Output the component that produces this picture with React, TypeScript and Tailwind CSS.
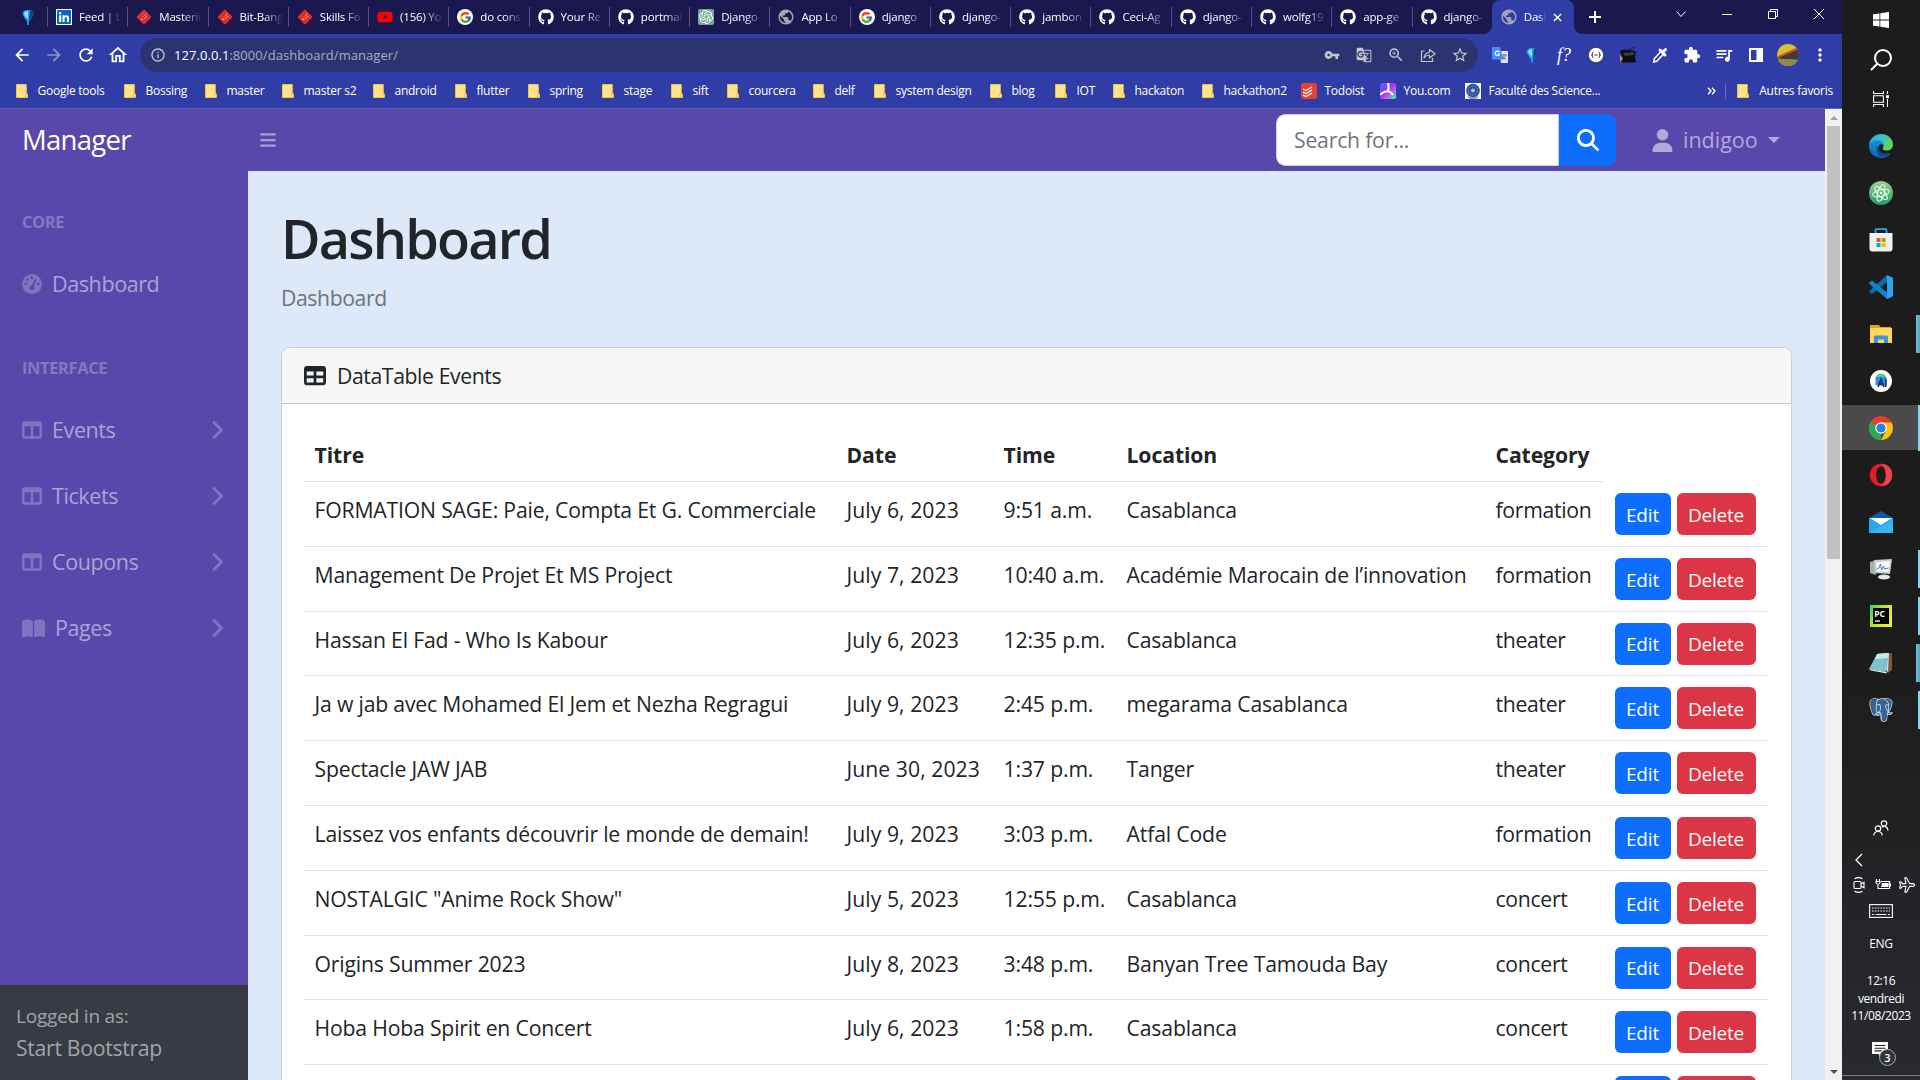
import React from "react";
import { FaAngleRight, FaBars, FaBookOpen, FaGaugeHigh, FaMagnifyingGlass, FaTable, FaTableColumns, FaUser } from "react-icons/fa6";
import { FaGithub, FaLinkedin, FaYoutube } from "react-icons/fa";
import { FcGoogle } from "react-icons/fc";
import { SiOpenai, SiPostgresql } from "react-icons/si";
import {
  MdArrowBack,
  MdArrowForward,
  MdExtension,
  MdGTranslate,
  MdInfoOutline,
  MdMoreVert,
  MdOutlineHome,
  MdPublic,
  MdQueueMusic,
  MdRefresh,
  MdStarBorder,
  MdVpnKey,
  MdZoomIn,
} from "react-icons/md";

type IconProps = { className?: string };

/* ---------- small drawings ---------- */

const Pin = ({ className = "" }: IconProps) => (
  <svg viewBox="0 0 16 16" className={`size-4 ${className}`}>
    <path d="M2.500 5 Q2.500 1 8 1 Q13.500 1 13.500 5 Q13 7 9 12.500 L8.800 16 H7.200 L7 12.500 Q3 7 2.500 5Z" fill="#1f9be8" />
    <path d="M4 4 Q6 1.500 8 2 L8 10 Q4 7 4 4Z" fill="#8fe0ff" />
    <path d="M10 2 Q13.500 2 13.500 5 Q12 8 9 12Z" fill="#0a3f86" />
  </svg>
);

const RedDiamond = () => (
  <svg viewBox="0 0 16 16" className="size-4">
    <rect x="2.600" y="2.600" width="10.800" height="10.800" rx="1" transform="rotate(45 8 8)" fill="#dc2f2a" />
    <path d="M5 10.500h2M8 10l3-3M8.500 6.500l2-1.500M6.500 8.500l1-1" stroke="#f6aaa5" strokeWidth="1" fill="none" />
  </svg>
);

const OpenAiTile = () => (
  <span className="flex size-4 items-center justify-center rounded-[2px] bg-[#74aa9c] text-white">
    <SiOpenai className="size-3.5" />
  </span>
);

const Folder = () => (
  <svg viewBox="0 0 12 14" className="h-3.5 w-3 shrink-0">
    <path d="M.5 .5h9.800v9l1.200.5v3.500H.5z" fill="#ffe38a" stroke="#e9c44a" strokeWidth="1" />
    <path d="M9.500 10v3.500" stroke="#e9c44a" strokeWidth="1" />
  </svg>
);

const Todoist = () => (
  <svg viewBox="0 0 16 16" className="size-4 shrink-0">
    <rect width="16" height="16" rx="2.500" fill="#e44332" />
    <path d="M2 6l3 1.500L11 4M2 9l3 1.500L11 7M2 12l3 1.500L11 10" stroke="#fff" strokeWidth="1.200" fill="none" />
  </svg>
);

const YouCom = () => (
  <svg viewBox="0 0 16 16" className="size-4 shrink-0">
    <defs>
      <linearGradient id="you" x1="0" y1="0" x2="1" y2="1">
        <stop offset="0" stopColor="#5a5cff" />
        <stop offset=".45" stopColor="#8a3bff" />
        <stop offset=".65" stopColor="#d84fe0" />
        <stop offset=".85" stopColor="#33d9c0" />
        <stop offset="1" stopColor="#ffd84a" />
      </linearGradient>
    </defs>
    <rect width="16" height="16" rx="2.500" fill="url(#you)" />
    <path d="M8 0 Q9 5 8 8 Q4 8.500 0 11.500 M8 8 Q11 9 13 12" stroke="#fff" strokeWidth="2.200" fill="none" />
  </svg>
);

const Faculty = () => (
  <svg viewBox="0 0 16 16" className="size-4 shrink-0">
    <rect width="16" height="16" fill="#f3f6fb" />
    <circle cx="8" cy="7.500" r="6.800" fill="#2c4f94" />
    <circle cx="8" cy="7.500" r="4.500" fill="none" stroke="#8fa8d6" strokeWidth="1" strokeDasharray="1 .8" />
    <circle cx="8" cy="7.500" r="2" fill="#a9c1ea" />
    <path d="M3 13.500l2 1.500h6l2-1.500" stroke="#2c4f94" fill="none" />
  </svg>
);

const Share = () => (
  <svg viewBox="0 0 16 16" className="size-4" fill="none" stroke="currentColor" strokeWidth="1.200">
    <path d="M4.500 4H1.500v10.500h11V11" />
    <path d="M4 11Q4.500 6 9.500 5.500V2.500L15 6.800 9.500 11V8.300Q6 8 4 11Z" strokeLinejoin="round" />
  </svg>
);

const Eyedropper = () => (
  <svg viewBox="0 0 16 16" className="size-4" fill="none" stroke="#fff">
    <path d="M9 4.300l2.700 2.700-7 7.300-3 .7 .6-3.200z" strokeWidth="1.600" />
    <path d="M8 3l5 5M11.500 4.500l2-2" strokeWidth="3" strokeLinecap="round" />
  </svg>
);

const BlackFox = () => (
  <svg viewBox="0 0 16 16" className="size-4">
    <path d="M0 4l3-1.500 9 1 4 1-1 5 1 6H2l1-4z" fill="#0c0d12" />
    <path d="M5 3.500Q10 3 13 .5L15 1" stroke="#222" fill="none" />
    <path d="M0 8l2.800 3.500L0 15z" fill="#f08a24" />
    <path d="M3 6l11-1v3l-9 1z" fill="#3a3c46" />
  </svg>
);

const Braces = () => (
  <svg viewBox="0 0 16 16" className="size-4">
    <circle cx="8" cy="8" r="7.600" fill="#fff" stroke="#222" strokeWidth=".6" />
    <path d="M5.500 4.800Q4.300 5 4.500 6.700T3.500 8Q4.500 8 4.500 9.300T5.500 11.200M10.500 4.800Q11.700 5 11.500 6.700T12.500 8Q11.500 8 11.500 9.300T10.500 11.200M6.500 8h3" stroke="#333" strokeWidth="1" fill="none" />
  </svg>
);

const GoogleTranslate = () => (
  <svg viewBox="0 0 16 16" className="size-4">
    <path d="M7 4h9v12H9z" fill="#dfe3ea" />
    <path d="M9.500 8h5M12 7v1M14 8Q13 11 10 12.500M10.500 9q1 2.500 3.500 3.500" stroke="#57677d" fill="none" strokeWidth=".9" />
    <path d="M0 0h8l3.500 12.500H1Q0 12.500 0 11.500z" fill="#4c8bf5" />
    <path d="M7.300 5A2.200 2.200 0 1 0 7.600 7H5.800" stroke="#fff" strokeWidth="1.200" fill="none" />
  </svg>
);

const SidePanel = () => (
  <svg viewBox="0 0 16 16" className="size-4">
    <path d="M1 1h14v14H1zM3 3v10h5.500V3z" fill="#fff" fillRule="evenodd" />
  </svg>
);

const Avatar = () => (
  <svg viewBox="0 0 22 22" className="size-[22px]">
    <defs>
      <clipPath id="avatar">
        <circle cx="11" cy="11" r="11" />
      </clipPath>
    </defs>
    <g clipPath="url(#avatar)">
      <rect width="22" height="22" fill="#d3c436" />
      <path d="M0 14L22 5v11L0 15z" fill="#3c3c40" />
      <path d="M0 12.500L19 4l2 1.500L1 14z" fill="#dd4a22" />
      <path d="M0 14.500l22 1.500v6H0z" fill="#918b46" />
    </g>
  </svg>
);

/* ---------- taskbar drawings ---------- */

const WindowsLogo = () => (
  <svg viewBox="0 0 16 16" className="size-4" fill="#fff">
    <path d="M0 2.300l6.500-.9v6.200H0zM7.300 1.300L16 0v7.600H7.300zM0 8.400h6.500v6.200L0 13.700zM7.300 8.400H16V16l-8.700-1.300z" />
  </svg>
);

const TaskSearch = () => (
  <svg viewBox="0 0 22 22" className="size-[22px]" fill="none" stroke="#fff" strokeWidth="2">
    <circle cx="13" cy="9" r="8" />
    <path d="M7.500 14.500L1 21" />
  </svg>
);

const TaskView = () => (
  <svg viewBox="0 0 16 16" className="size-4" fill="none" stroke="#fff" strokeWidth="1.100">
    <path d="M.6 0v2.500h9.800V0M.6 16v-2.500h9.800V16M.6 4.800h9.800v6.400H.6zM14.500 0v3M14.500 8v8" />
    <path d="M13 4.200h3v3h-3z" fill="#fff" stroke="none" />
  </svg>
);

const Edge = () => (
  <svg viewBox="0 0 24 24" className="size-6">
    <defs>
      <linearGradient id="edgeA" x1="0" y1="0" x2="1" y2=".5">
        <stop offset="0" stopColor="#2ba8e0" />
        <stop offset=".5" stopColor="#35c1d2" />
        <stop offset="1" stopColor="#62d84b" />
      </linearGradient>
      <linearGradient id="edgeB" x1="0" y1="0" x2="0" y2="1">
        <stop offset="0" stopColor="#1795dc" />
        <stop offset="1" stopColor="#0c60b4" />
      </linearGradient>
    </defs>
    <path d="M0 11C1 4 6 0 12 0c7 0 12 5 12 10.500 0 4-3 6-6.500 6-3 0-4.500-1-3.500-2.500C16 10 12 7 8 7c-4 0-7 2-8 4z" fill="url(#edgeA)" />
    <path d="M0 12c0-4 4-6 8-6 4 0 6.500 2.500 6.500 5-4-2-5.500 1-5 4 1 5 6 7 12 4.500C19 23 16 24 12 24 5 24 0 19 0 12z" fill="url(#edgeB)" />
    <path d="M8 12c-1.500 6 2 11 6 11.500 3-.5 6-2 8-5-6 2.500-11.500.5-12.500-4z" fill="#124a8f" />
  </svg>
);

const Atom = () => (
  <svg viewBox="0 0 24 24" className="size-6">
    <defs>
      <linearGradient id="atom" x1="0" y1="0" x2="0" y2="1">
        <stop offset="0" stopColor="#9fce8b" />
        <stop offset="1" stopColor="#1f9f6d" />
      </linearGradient>
    </defs>
    <circle cx="12" cy="12" r="12" fill="url(#atom)" />
    <g fill="none" stroke="#e9fff2" strokeWidth="1">
      <ellipse cx="12" cy="12" rx="8.500" ry="3.300" transform="rotate(-14 12 12)" />
      <ellipse cx="12" cy="12" rx="8.500" ry="3.300" transform="rotate(46 12 12)" />
      <ellipse cx="12" cy="12" rx="8.500" ry="3.300" transform="rotate(106 12 12)" />
    </g>
    <circle cx="12" cy="12" r="1.300" fill="#fff" />
  </svg>
);

const Store = () => (
  <svg viewBox="0 0 24 24" className="size-6">
    <path d="M6.500 6V2q0-.8.800-.8h9.400q.8 0 .8.800v4" fill="none" stroke="#27a9ea" strokeWidth="1.800" />
    <path d="M.5 5h23v15.500q0 3-3 3h-17q-3 0-3-3z" fill="#f0f0f0" />
    <path d="M7.500 10h4v4h-4z" fill="#f25022" />
    <path d="M12.600 10h4v4h-4z" fill="#7fba00" />
    <path d="M7.500 15h4v4h-4z" fill="#00a4ef" />
    <path d="M12.600 15h4v4h-4z" fill="#ffb900" />
  </svg>
);

const VsCode = () => (
  <svg viewBox="0 0 24 24" className="size-6">
    <path d="M18 0v7L3 19 0 16.500z" fill="#0a6db3" />
    <path d="M0 7.500L3 5.500 18 17.500V24L1 9.500z" fill="#1083cd" />
    <path d="M18 0l6 2.800v18.400L18 24z" fill="#2fa4ee" />
  </svg>
);

const Explorer = () => (
  <svg viewBox="0 0 24 24" className="size-6">
    <path d="M1 3h9l1.500 2H22v6H1z" fill="#e3a01b" />
    <path d="M1 6h22v15H1z" fill="#ffd65c" />
    <path d="M5 21v-6q0-1.500 1.500-1.500h11q1.500 0 1.500 1.500v6h-4v-3.500H9V21z" fill="#3a93d9" />
  </svg>
);

const AndroidStudio = () => (
  <svg viewBox="0 0 24 24" className="size-6">
    <circle cx="12" cy="12" r="11" fill="#fff" />
    <path d="M7 8.500a5 4 0 0 1 10 0z" fill="#3ddc84" />
    <path d="M6.500 8h11v8l-4 1-7-1z" fill="#4285f4" />
    <path d="M9 18l3-8 3 8M10 15h4M16.800 10v8" stroke="#0b3050" strokeWidth="1.500" fill="none" />
  </svg>
);

const Chrome = () => (
  <svg viewBox="0 0 24 24" className="size-6">
    <path d="M12 12L1.600 6A12 12 0 0 1 22.400 6z" fill="#e33b2e" />
    <path d="M12 6.500H22.600V6H1.600L7 15z" fill="#e33b2e" />
    <path d="M1.600 6L7.300 15 12 17 9 23.700A12 12 0 0 1 1.600 6z" fill="#2da94f" />
    <path d="M12 12L12 24A12 12 0 0 1 1.600 6z" fill="#2da94f" />
    <path d="M16.800 14.800L12 24A12 12 0 0 0 22.600 6.500H12z" fill="#fbc116" />
    <circle cx="12" cy="12" r="5.800" fill="#fff" />
    <circle cx="12" cy="12" r="4.600" fill="#2f7de9" />
  </svg>
);

const Opera = () => (
  <svg viewBox="0 0 24 24" className="size-6">
    <path fillRule="evenodd" d="M12 .8a11.200 11.200 0 1 0 0 22.400 11.200 11.200 0 1 0 0-22.400zM12 3.500c3 0 4.800 3.800 4.800 8.500s-1.800 8.500-4.800 8.500-4.800-3.800-4.800-8.500S9 3.500 12 3.500z" fill="#e21b2c" />
    <path d="M12 .8c8 0 11.200 6 11.200 11.200S19.500 23 12 23.200c3-1.200 4.800-5 4.800-11.200S15 3 12 .8z" fill="#f0434c" />
  </svg>
);

const Mail = () => (
  <svg viewBox="0 0 24 24" className="size-6">
    <path d="M0 8l12-7 12 7z" fill="#0d5aa7" />
    <path d="M0 8h24v15H0z" fill="#2aa7ea" />
    <path d="M1 8h22l-11 7z" fill="#fff" />
    <path d="M0 23l24-13v13z" fill="#45c0f7" opacity=".6" />
  </svg>
);

const Monitor = () => (
  <svg viewBox="0 0 24 24" className="size-6">
    <path d="M1 5l6-2v15l-6-2z" fill="#a9adb0" />
    <path d="M2 7.500l2-.5v2l-2 .3z" fill="#7ed957" />
    <path d="M5 3l18-1-2 15-15-1z" fill="#c9cccf" />
    <path d="M7 5l14-.7-1.500 10.500L8 14.500z" fill="#f8fbfe" />
    <path d="M8 12l2-1 1.500-4 1 6 2-4 1 3 4-1" stroke="#2f86cf" fill="none" />
    <ellipse cx="15" cy="20" rx="6" ry="2.500" fill="#e4e6e8" />
  </svg>
);

const PyCharm = () => (
  <svg viewBox="0 0 24 24" className="size-6">
    <defs>
      <linearGradient id="pc" x1="0" y1="0" x2="1" y2=".6">
        <stop offset="0" stopColor="#21d789" />
        <stop offset=".4" stopColor="#a6e02c" />
        <stop offset="1" stopColor="#f3ef3a" />
      </linearGradient>
    </defs>
    <rect x="1" y="1" width="22" height="22" fill="url(#pc)" />
    <rect x="4" y="4" width="16" height="16" fill="#000" />
    <path d="M6 17h5" stroke="#fff" strokeWidth="1.300" />
    <text x="5.200" y="12.500" fill="#fff" fontSize="8.500" fontWeight="700" fontFamily="Open Sans, sans-serif">PC</text>
  </svg>
);

const Notepad = () => (
  <svg viewBox="0 0 24 24" className="size-6">
    <path d="M19 3l4-1v17l-4 3z" fill="#7b5a35" />
    <path d="M8 3l12-1-1 20z" fill="#d8dbdc" />
    <path d="M8 3l12-1-3 19L0 18z" fill="#7fc1cd" />
    <path d="M8 3l12-1-1 5-13 1z" fill="#c9e6ea" />
    <path d="M0 18l17 3 1 1.500L2 19.500z" fill="#eef3f4" />
  </svg>
);

const People = () => (
  <svg viewBox="0 0 16 16" className="size-4" fill="none" stroke="#fff" strokeWidth="1.200">
    <circle cx="11" cy="3.500" r="2.700" />
    <path d="M8.500 7Q14.500 5 15 10.500" />
    <circle cx="5" cy="8.500" r="2.700" />
    <path d="M.8 15.500Q1 11.500 5 11.500T9.200 15.500" />
  </svg>
);

const MeetNow = () => (
  <svg viewBox="0 0 16 16" className="size-4" fill="none" stroke="#fff" strokeWidth="1.100">
    <rect x="3" y="4.500" width="7" height="7" rx="1" />
    <path d="M10 7l3-1.700v5.400L10 9M3.500 1.800Q7.500-.5 11.500 1.800M3.500 14.200Q7.500 16.500 11.500 14.200" />
  </svg>
);

const Battery = () => (
  <svg viewBox="0 0 16 16" className="size-4" fill="none" stroke="#fff">
    <path d="M6 4.500h8.500v7H4M15.500 6.500v3" strokeWidth="1.200" />
    <path d="M7 6h6.500v4H6z" fill="#fff" stroke="none" />
    <path d="M1.500 2v2M4.500 2v2M1 4.500h4v1.500Q3 8.500 1 6zM3 7.500v4h2" strokeWidth="1.100" />
  </svg>
);

const Plane = () => (
  <svg viewBox="0 0 16 16" className="size-4" fill="none" stroke="#fff" strokeWidth="1.100" strokeLinejoin="round">
    <path d="M15.500 8q0-1.400-2-1.400h-3L7.500.7H5.800L7 6.600H3.500L2 4.800H.6L1.500 8 .6 11.200H2l1.500-1.800H7L5.800 15.300h1.700l3-5.900h3q2 0 2-1.400z" />
  </svg>
);

const Keyboard = () => (
  <svg viewBox="0 0 24 14" className="h-3.5 w-6" fill="none" stroke="#fff" strokeWidth="1.100">
    <rect x=".6" y=".6" width="22.800" height="12.800" />
    <path d="M3 4h18M3 7h18" strokeDasharray="1.500 1.300" />
    <path d="M3 10.500h2M6.500 10.500h11M19 10.500h2" />
  </svg>
);

const Notifications = () => (
  <svg viewBox="0 0 26 26" className="size-[26px]">
    <path d="M1 1h16v12h-6.500L8 16.500V13H1z" fill="#fff" />
    <path d="M3.500 4.500h11M3.500 7.200h11M3.500 9.900h7" stroke="#222" strokeWidth="1.100" />
    <circle cx="16.500" cy="16.500" r="8" fill="#33343a" stroke="#a9a9ab" strokeWidth="1" />
    <text x="16.500" y="20.500" textAnchor="middle" fill="#fff" fontSize="11" fontWeight="600" fontFamily="Open Sans, sans-serif">3</text>
  </svg>
);

/* ---------- browser ---------- */

const gh = <FaGithub className="size-4 text-white" />;
const google = (
  <span className="flex size-4 items-center justify-center rounded-full bg-white">
    <FcGoogle className="size-[13px]" />
  </span>
);
const globe = <MdPublic className="-m-px size-[18px] text-[#a3a5ad]" />;

const tabs: { icon: React.ReactNode; title: string }[] = [
  { icon: <FaLinkedin className="size-4 bg-white text-[#0a66c2]" />, title: "Feed | Li" },
  { icon: <RedDiamond />, title: "Masterin" },
  { icon: <RedDiamond />, title: "Bit-Bang" },
  { icon: <RedDiamond />, title: "Skills Fo" },
  { icon: <FaYoutube className="size-4 text-[#f00]" />, title: "(156) Yo" },
  { icon: google, title: "do cons" },
  { icon: gh, title: "Your Re" },
  { icon: gh, title: "portmal" },
  { icon: <OpenAiTile />, title: "Django" },
  { icon: globe, title: "App Lo" },
  { icon: google, title: "django" },
  { icon: gh, title: "django-" },
  { icon: gh, title: "jambon" },
  { icon: gh, title: "Ceci-Ag" },
  { icon: gh, title: "django-" },
  { icon: gh, title: "wolfg19" },
  { icon: gh, title: "app-ge" },
  { icon: gh, title: "django-" },
];

const TabStrip = () => (
  <div className="flex h-[34px] items-stretch bg-[#1b184f] text-[11.5px] tracking-[-0.2px] text-white">
    <div className="flex w-[47px] items-center pl-5">
      <Pin />
    </div>
    {tabs.map((t, i) => (
      <div key={i} className="flex w-[80.27px] shrink-0 items-center">
        <span className="h-5 w-px shrink-0 bg-[#565480]" />
        <span className="ml-2 shrink-0">{t.icon}</span>
        <span className="ml-[7px] w-[43px] overflow-hidden whitespace-nowrap [mask-image:linear-gradient(90deg,#000_55%,transparent)]">{t.title}</span>
      </div>
    ))}
    <div className="relative flex w-[82px] items-center rounded-t-[8px] bg-[#313da7] pl-[9px]">
      <span className="absolute bottom-0 -left-2 size-2 bg-[radial-gradient(circle_at_0_0,transparent_7.5px,#313da7_8px)]" />
      <span className="absolute -right-2 bottom-0 size-2 bg-[radial-gradient(circle_at_100%_0,transparent_7.5px,#313da7_8px)]" />
      <span>{globe}</span>
      <span className="ml-[7px] w-[22px] overflow-hidden whitespace-nowrap [mask-image:linear-gradient(90deg,#000_70%,transparent)]">Dash</span>
      <svg viewBox="0 0 10 10" className="ml-[7px] size-[9px]">
        <path d="M1 1l8 8M9 1l-8 8" stroke="#fff" strokeWidth="1.600" />
      </svg>
    </div>
    <svg viewBox="0 0 12 12" className="mt-[11px] ml-[15px] size-3">
      <path d="M6 0v12M0 6h12" stroke="#fff" strokeWidth="2" />
    </svg>
    <div className="ml-auto flex h-7 items-center">
      <span className="flex w-[46px] justify-center">
        <svg viewBox="0 0 10 10" className="size-2.5" fill="none" stroke="#fff">
          <path d="M.5 2.500L5 7.500 9.500 2.500" />
        </svg>
      </span>
      <span className="flex w-[46px] justify-center">
        <span className="h-px w-2.5 bg-white" />
      </span>
      <span className="flex w-[46px] justify-center">
        <svg viewBox="0 0 10 10" className="size-2.5" fill="none" stroke="#fff">
          <path d="M.5 2.500h7v7h-7zM2.500 2.500v-2h7v7h-2" />
        </svg>
      </span>
      <span className="flex w-[46px] justify-center">
        <svg viewBox="0 0 10 10" className="size-2.5" fill="none" stroke="#fff">
          <path d="M0 0l10 10M10 0L0 10" />
        </svg>
      </span>
    </div>
  </div>
);

const extensions: React.ReactNode[] = [
  <GoogleTranslate />,
  <Pin />,
  <span className="font-['Liberation_Serif',serif] text-[18px] leading-none italic">f?</span>,
  <Braces />,
  <BlackFox />,
  <Eyedropper />,
  <MdExtension className="size-[18px]" />,
  <MdQueueMusic className="size-5" />,
  <SidePanel />,
  <Avatar />,
  <MdMoreVert className="size-5" />,
];

const Toolbar = () => (
  <div className="flex h-[42px] items-center text-white">
    <div className="flex w-[140px] pl-1.5">
      {[
        <MdArrowBack className="size-5" />,
        <MdArrowForward className="size-5 opacity-45" />,
        <MdRefresh className="size-5" />,
        <MdOutlineHome className="size-5 scale-110" />,
      ].map((icon, i) => (
        <span key={i} className="flex w-8 justify-center">
          {icon}
        </span>
      ))}
    </div>
    <div className="flex h-[34px] w-[1338px] items-center rounded-full bg-[#2b3370] text-[#c4c5cb]">
      <MdInfoOutline className="ml-2.5 size-4" />
      <span className="ml-[8px] pt-px text-[13px] tracking-[0.06px] text-[#a9acc4]">
        <span className="text-white">127.0.0.1</span>:8000/dashboard/manager/
      </span>
      <div className="mr-0.5 ml-auto flex">
        {[
          <MdVpnKey className="size-4" />,
          <MdGTranslate className="size-4" />,
          <MdZoomIn className="size-[18px]" />,
          <Share />,
          <MdStarBorder className="size-[18px]" />,
        ].map((icon, i) => (
          <span key={i} className="flex w-8 items-center justify-center">
            {icon}
          </span>
        ))}
      </div>
    </div>
    <div className="ml-1.5 flex items-center">
      {extensions.map((e, i) => (
        <span key={i} className="flex w-8 items-center justify-center">
          {e}
        </span>
      ))}
    </div>
  </div>
);

const bookmarks: [string, string, React.ReactNode?][] = [
  ["Google tools", "w-[108px]"],
  ["Bossing", "w-[81px]"],
  ["master", "w-[77px]"],
  ["master s2", "w-[91px]"],
  ["android", "w-[82px]"],
  ["flutter", "w-[73px]"],
  ["spring", "w-[74px]"],
  ["stage", "w-[69px]"],
  ["sift", "w-[56px]"],
  ["courcera", "w-[86px]"],
  ["delf", "w-[61px]"],
  ["system design", "w-[116px]"],
  ["blog", "w-[65px]"],
  ["IOT", "w-[58px]"],
  ["hackaton", "w-[89px]"],
  ["hackathon2", "w-[99px]"],
  ["Todoist", "w-[79px]", <Todoist />],
  ["You.com", "w-[85px]", <YouCom />],
  ["Faculté des Science...", "w-[150px]", <Faculty />],
];

const BookmarkBar = () => (
  <div className="flex h-[33px] items-center border-b border-[#5a66b4] pb-[3px] pl-[15.5px] text-[12px] tracking-[-0.25px] whitespace-nowrap text-white">
    {bookmarks.map(([name, width, icon]) => (
      <span key={name} className={`flex shrink-0 items-center ${width}`}>
        {icon ?? <Folder />}
        <span className={icon ? "ml-2" : "ml-2.5"}>{name}</span>
      </span>
    ))}
    <span className="ml-auto flex items-center pr-[9px]">
      <svg viewBox="0 0 9 8" className="h-2 w-[9px]" fill="none" stroke="#fff" strokeWidth="1.400">
        <path d="M1 .8L4 4 1 7.200M5 .8L8 4 5 7.200" />
      </svg>
      <span className="ml-[9px] h-4 w-px bg-[#6670bb]" />
      <span className="mr-2.5 ml-[11px] flex">
        <Folder />
      </span>
      Autres favoris
    </span>
  </div>
);

/* ---------- dashboard page ---------- */

const TopNav = () => (
  <nav className="flex h-[62px] shrink-0 items-center bg-[#5947ab]">
    <span className="w-[260px] pl-[22px] text-[27.5px] leading-none tracking-[-0.7px] text-white">Manager</span>
    <FaBars className="h-[18px] w-[16px] text-[#a79dd1]" />
    <div className="mr-9 ml-auto flex h-[52px] w-[340px] overflow-hidden rounded-[9px]">
      <div className="flex w-[283px] items-center rounded-l-[9px] border border-[#ced4da] bg-white pl-[17px] text-[21.2px] tracking-[-0.2px] text-[#6c757d]">Search for...</div>
      <div className="flex flex-1 items-center justify-center bg-[#0d6efd] text-white">
        <FaMagnifyingGlass className="size-[22px]" />
      </div>
    </div>
    <div className="flex w-[173px] items-center text-[21.5px] text-[#b2a9da]">
      <FaUser className="h-[23px] w-[21px]" />
      <span className="ml-2.5 w-[75px]">indigoo</span>
      <span className="ml-[10px] border-x-[6px] border-t-[6px] border-x-transparent border-t-[#b2a9da]" />
    </div>
  </nav>
);

const links: [string, typeof FaTableColumns][] = [
  ["Events", FaTableColumns],
  ["Tickets", FaTableColumns],
  ["Coupons", FaTableColumns],
  ["Pages", FaBookOpen],
];

const Sidebar = () => (
  <aside className="flex w-[248px] shrink-0 flex-col bg-[#5947ab] text-[21.5px] tracking-[-0.4px] text-[#aca3d5]">
    <div className="mt-[38px] flex h-[26px] items-center pl-[22px] text-[16.5px] font-bold text-[#8578c3]">CORE</div>
    <div className="mt-[16px] flex h-[66px] items-center pl-[22px]">
      <FaGaugeHigh className="size-[20px] text-[#8073c0]" />
      <span className="ml-[10px]">Dashboard</span>
    </div>
    <div className="mt-[38px] flex h-[26px] items-center pl-[22px] text-[16.5px] font-bold text-[#8578c3]">INTERFACE</div>
    <div className="mt-[16px] flex flex-col">
      {links.map(([name, Icon]) => (
        <div key={name} className="flex h-[66px] items-center pr-[22px] pl-[22px]">
          <Icon className={name === "Pages" ? "h-[21px] w-[23px] text-[#8073c0]" : "size-[20px] text-[#8073c0]"} />
          <span className="ml-[10px]">{name}</span>
          <FaAngleRight className="ml-auto h-[24px] w-[18px] text-[#8073c0]" />
        </div>
      ))}
    </div>
    <div className="mt-auto flex h-[95px] flex-col bg-[#373b43] pt-[16px] pl-4 text-[#a2a4a8]">
      <span className="text-[19px] leading-[31px] tracking-[-0.2px]">Logged in as:</span>
      <span className="text-[21.2px] leading-[31px] tracking-[-0.3px]">Start Bootstrap</span>
    </div>
  </aside>
);

const events: [string, string, string, string, string][] = [
  ["FORMATION SAGE: Paie, Compta Et G. Commerciale", "July 6, 2023", "9:51 a.m.", "Casablanca", "formation"],
  ["Management De Projet Et MS Project", "July 7, 2023", "10:40 a.m.", "Académie Marocain de l’innovation", "formation"],
  ["Hassan El Fad - Who Is Kabour", "July 6, 2023", "12:35 p.m.", "Casablanca", "theater"],
  ["Ja w jab avec Mohamed El Jem et Nezha Regragui", "July 9, 2023", "2:45 p.m.", "megarama Casablanca", "theater"],
  ["Spectacle JAW JAB", "June 30, 2023", "1:37 p.m.", "Tanger", "theater"],
  ["Laissez vos enfants découvrir le monde de demain!", "July 9, 2023", "3:03 p.m.", "Atfal Code", "formation"],
  ["NOSTALGIC \"Anime Rock Show\"", "July 5, 2023", "12:55 p.m.", "Casablanca", "concert"],
  ["Origins Summer 2023", "July 8, 2023", "3:48 p.m.", "Banyan Tree Tamouda Bay", "concert"],
  ["Hoba Hoba Spirit en Concert", "July 6, 2023", "1:58 p.m.", "Casablanca", "concert"],
  ["", "", "", "", ""],
];

const columns = "grid grid-cols-[532px_157px_123px_369px_119px_165px] [&>*]:pl-[10.5px]";

const cellTracking = ["tracking-[-0.18px]", "tracking-[0.05px]", "tracking-[-0.15px]", "tracking-[-0.15px]", "tracking-[-0.3px]"];

const EventTable = () => (
  <div className="ml-[22px] w-[1465px] pt-[25px] text-[21.2px] whitespace-nowrap">
    <div className={`${columns} h-[53px] font-bold tracking-[-0.1px]`}>
      {["Titre", "Date", "Time", "Location", "Category"].map((c) => (
        <span key={c} className="border-b border-[#dee2e6] pt-2 leading-[36px]">
          {c}
        </span>
      ))}
    </div>
    {events.map((row, i) => (
      <div key={i} className={`${columns} h-[64.8px] border-b border-[#dee2e6]`}>
        {row.map((cell, j) => (
          <span key={j} className={`pt-[10px] leading-[36px] ${cellTracking[j]}`}>
            {cell}
          </span>
        ))}
        <div className="flex gap-1.5 pt-[11px] text-[19px] tracking-[-0.2px] text-white">
          <button className="flex h-[42px] w-14 items-center justify-center rounded-[6px] bg-[#0d6efd] pt-0.5">Edit</button>
          <button className="flex h-[42px] w-[79px] items-center justify-center rounded-[6px] bg-[#dc3545] pt-0.5">Delete</button>
        </div>
      </div>
    ))}
  </div>
);

const Main = () => (
  <main className="flex-1 overflow-hidden bg-[#dde8f8] pl-[33px] text-[#212529]">
    <h1 className="mt-[31px] text-[54px] leading-[72px] font-semibold tracking-[-1.8px]">Dashboard</h1>
    <p className="mt-[6px] text-[21.2px] leading-[36px] tracking-[-0.4px] text-[#6c757d]">Dashboard</p>
    <section className="mt-[31px] h-[900px] w-[1511px] rounded-t-[9px] border border-[#c9ced5] bg-white">
      <header className="flex h-[56px] items-center rounded-t-[8px] border-b border-[#c8c9cb] bg-[#f7f7f7] pl-[22px]">
        <FaTable className="h-[23px] w-[22px]" />
        <span className="ml-[11px] text-[21.2px] tracking-[-0.4px]">DataTable Events</span>
      </header>
      <EventTable />
    </section>
  </main>
);

const Scrollbar = () => (
  <div className="flex w-[17px] shrink-0 flex-col items-center bg-[#f1f1f1]">
    <span className="mt-[7px] border-x-4 border-b-4 border-x-transparent border-b-[#a3a3a3]" />
    <span className="mt-[6px] h-[433px] w-[13px] bg-[#c1c1c1]" />
    <span className="mt-auto mb-[6px] border-x-4 border-t-4 border-x-transparent border-t-[#505050]" />
  </div>
);

/* ---------- taskbar ---------- */

type Mark = "none" | "open" | "stack" | "active";

const apps: [React.ReactNode, Mark][] = [
  [<Edge />, "none"],
  [<Atom />, "none"],
  [<Store />, "none"],
  [<VsCode />, "none"],
  [<Explorer />, "stack"],
  [<AndroidStudio />, "none"],
  [<Chrome />, "active"],
  [<Opera />, "none"],
  [<Mail />, "none"],
  [<Monitor />, "open"],
  [<PyCharm />, "open"],
  [<Notepad />, "stack"],
  [
    <span className="relative flex">
      <svg viewBox="0 0 24 24" className="absolute size-6">
        <path d="M1 5Q2 1 8 1.500 12 0 16 1.500 22 0 23 5 22 11 20 14L23.500 16 17 17.500Q17 23 13.500 23 11 22 11 17 6 20 4 16 1 10 1 5Z" fill="#336791" />
      </svg>
      <SiPostgresql className="relative size-6 text-[#dfe6ec]" />
    </span>,
    "open",
  ],
];

const markClass: Record<Mark, string> = {
  none: "hidden",
  open: "h-[38px] w-0.5 bg-[#76d9f8]",
  stack: "h-[38px] w-1 border-r-2 border-[#5aa9bf] bg-[#62bfd6]",
  active: "h-[46px] w-0.5 bg-[#76d9f8]",
};

const Taskbar = () => (
  <aside className="flex w-[78px] shrink-0 flex-col bg-linear-to-b from-[#1c1c1c] from-60% to-[#292a30] text-[12px] text-white">
    <span className="flex h-10 items-center justify-center"><WindowsLogo /></span>
    <span className="flex h-10 items-center justify-center"><TaskSearch /></span>
    <span className="flex h-[42px] items-center justify-center pb-1"><TaskView /></span>
    {apps.map(([icon, mark], i) => (
      <div key={i} className="relative flex h-[47px] items-center justify-center">
        {mark === "active" && <span className="absolute inset-x-0 inset-y-px bg-[#4a4a4a]" />}
        <span className="relative">{icon}</span>
        <span className={`absolute right-0 ${markClass[mark]}`} />
      </div>
    ))}
    <span className="mt-[87px] flex justify-center"><People /></span>
    <svg viewBox="0 0 8 14" className="mt-[17px] ml-[13px] h-3.5 w-2" fill="none" stroke="#fff" strokeWidth="1.300">
      <path d="M7 1L1 7l6 6" />
    </svg>
    <span className="mt-[10px] flex justify-between pr-[5px] pl-[9px]">
      <MeetNow />
      <Battery />
      <Plane />
    </span>
    <span className="mt-[11px] flex justify-center"><Keyboard /></span>
    <span className="mt-[17px] text-center leading-[17px] tracking-[-0.3px]">ENG</span>
    <span className="mt-[20px] text-center leading-[17.5px] tracking-[-0.4px]">
      12:16
      <br />
      vendredi
      <br />
      11/08/2023
    </span>
    <span className="mt-[16px] flex justify-center pl-[5px]"><Notifications /></span>
    <span className="mt-auto mb-1 h-px bg-[#77777c]" />
  </aside>
);

export default function App() {
  return (
    <div className="flex h-[1080px] w-[1920px] overflow-hidden bg-[#1c1c1c] font-['Open_Sans','Noto_Sans',sans-serif]">
      <div className="flex w-[1842px] shrink-0 flex-col">
        <TabStrip />
        <div className="shrink-0 bg-[#313da7]">
          <Toolbar />
          <BookmarkBar />
        </div>
        <div className="flex min-h-0 flex-1">
          <div className="flex min-w-0 flex-1 flex-col">
            <TopNav />
            <div className="flex min-h-0 flex-1">
              <Sidebar />
              <Main />
            </div>
          </div>
          <Scrollbar />
        </div>
      </div>
      <Taskbar />
    </div>
  );
}
